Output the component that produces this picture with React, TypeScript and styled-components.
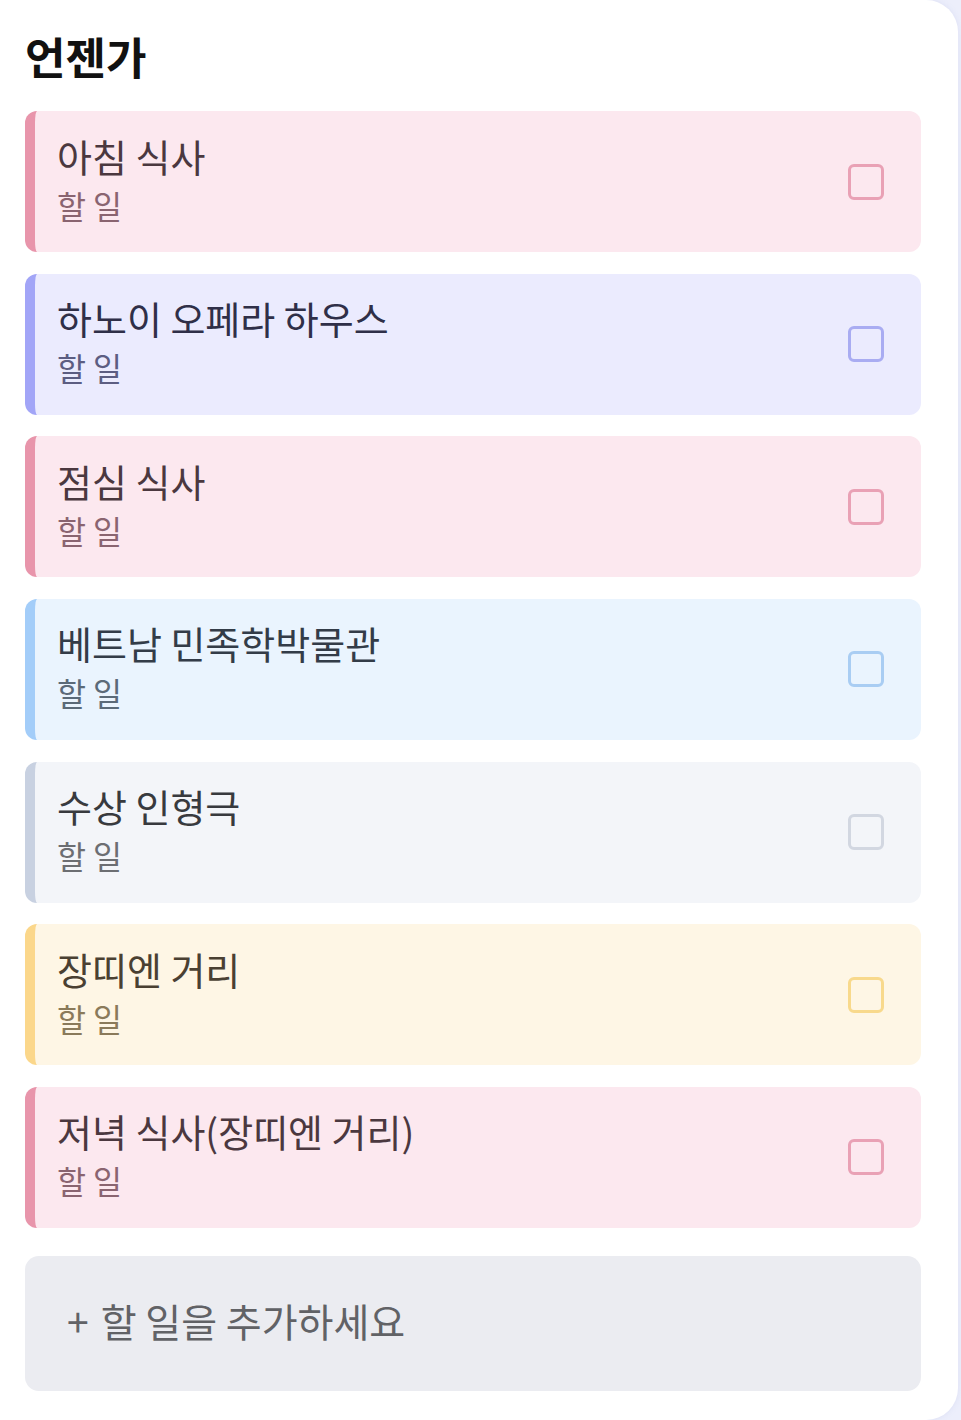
import React from 'react';
import styled, { createGlobalStyle } from 'styled-components';

const GlobalStyle = createGlobalStyle`
    html, body {
        margin: 0;
        padding: 0;
        background: #eceefb;
    }
    body {
        font-family: "Noto Sans CJK KR", "Noto Sans", sans-serif;
    }
`;

type Tone = 'pink' | 'lavender' | 'blue' | 'gray' | 'yellow';

const tones: Record<Tone, { bg: string; bar: string; box: string; title: string; sub: string }> = {
    pink: { bg: '#fce8ef', bar: '#e895ab', box: '#e9a1b5', title: '#4b383f', sub: '#8a6470' },
    lavender: { bg: '#ebebfe', bar: '#a2a5f7', box: '#a9acf2', title: '#2f2f48', sub: '#5c5d82' },
    blue: { bg: '#eaf4fe', bar: '#a3cdf9', box: '#a9cdf3', title: '#333c48', sub: '#5b6a78' },
    gray: { bg: '#f3f5f9', bar: '#c8d1e1', box: '#d2d7e1', title: '#383a3e', sub: '#6c6e72' },
    yellow: { bg: '#fef6e5', bar: '#fbd78b', box: '#f8d98c', title: '#4a4032', sub: '#8a7a5a' },
};

const Panel = styled.div`
    width: 958px;
    min-height: 1420px;
    box-sizing: border-box;
    background: #ffffff;
    border-radius: 0 32px 32px 0;
    box-shadow: 0 0 6px rgba(120, 130, 200, 0.12);
    padding: 26px 37px 0 25px;
`;

const Heading = styled.h2`
    margin: 0 0 25px 0;
    font-size: 44px;
    line-height: 60px;
    font-weight: 700;
    color: #111111;
`;

const List = styled.div`
    display: flex;
    flex-direction: column;
    gap: 21.67px;
`;

const Card = styled.div<{ $tone: Tone }>`
    display: flex;
    align-items: center;
    justify-content: space-between;
    height: 141px;
    box-sizing: border-box;
    padding: 0 37px 0 22px;
    background: ${(p) => tones[p.$tone].bg};
    border-left: 10px solid ${(p) => tones[p.$tone].bar};
    border-radius: 12px;
`;

const Texts = styled.div`
    display: flex;
    flex-direction: column;
    margin-top: -6px;
`;

const Title = styled.div<{ $tone: Tone }>`
    font-size: 38px;
    line-height: 50px;
    margin-bottom: 2px;
    color: ${(p) => tones[p.$tone].title};
`;

const Sub = styled.div<{ $tone: Tone }>`
    font-size: 31.5px;
    line-height: 44px;
    color: ${(p) => tones[p.$tone].sub};
`;

const Check = styled.div<{ $tone: Tone }>`
    width: 36px;
    height: 36px;
    box-sizing: border-box;
    border: 3px solid ${(p) => tones[p.$tone].box};
    border-radius: 6px;
`;

const AddButton = styled.div`
    margin-top: 28px;
    height: 135px;
    box-sizing: border-box;
    display: flex;
    align-items: center;
    gap: 12px;
    padding: 0 0 7px 42px;
    background: #ebecf1;
    border-radius: 14px;
    font-size: 39px;
    color: #616266;
`;

const items: { title: string; tone: Tone }[] = [
    { title: '아침 식사', tone: 'pink' },
    { title: '하노이 오페라 하우스', tone: 'lavender' },
    { title: '점심 식사', tone: 'pink' },
    { title: '베트남 민족학박물관', tone: 'blue' },
    { title: '수상 인형극', tone: 'gray' },
    { title: '장띠엔 거리', tone: 'yellow' },
    { title: '저녁 식사(장띠엔 거리)', tone: 'pink' },
];

const App: React.FC = () => {
    return (
        <>
            <GlobalStyle />
            <Panel>
                <Heading>언젠가</Heading>
                <List>
                    {items.map((item, i) => (
                        <Card key={i} $tone={item.tone}>
                            <Texts>
                                <Title $tone={item.tone}>{item.title}</Title>
                                <Sub $tone={item.tone}>할 일</Sub>
                            </Texts>
                            <Check $tone={item.tone} />
                        </Card>
                    ))}
                </List>
                <AddButton>
                    <span>+</span>
                    <span>할 일을 추가하세요</span>
                </AddButton>
            </Panel>
        </>
    );
};

export default App;
